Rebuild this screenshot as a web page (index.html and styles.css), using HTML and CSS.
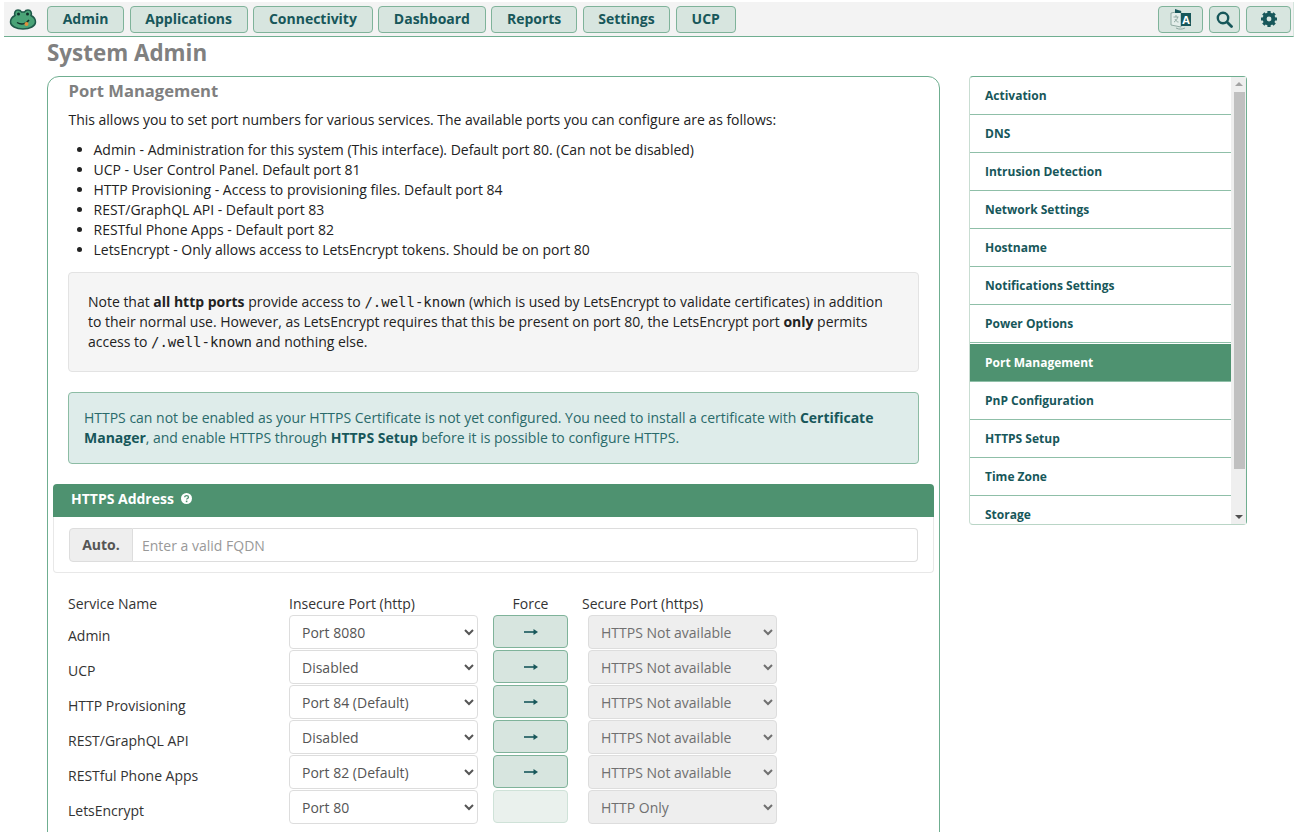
FILE: index.html
```html
<!DOCTYPE html>
<html lang="en">
<head>
  <meta charset="UTF-8">
  <title>System Admin</title>
  <link rel="stylesheet" href="styles.css">
</head>
<body>

<div class="topbar">
  <div class="logo">
    <svg width="28" height="24" viewBox="0 0 28 24">
      <path d="M6 8.5C5 6 6 3 9 3c2 0 3 1 3.500 2h3C16 4 17 3 19 3c3 0 4 3 3 5.500 3 1.500 4.500 4 4.500 6.500 0 4-5.500 7-12.500 7S1.500 19 1.500 15C1.500 12.500 3 10 6 8.500z" fill="#4aa377" stroke="#1f5a4a" stroke-width="1.500"/>
      <circle cx="9.500" cy="7" r="1.500" fill="#10302a"/>
      <circle cx="18.500" cy="7" r="1.500" fill="#10302a"/>
      <path d="M8 15.500c4 2.500 9 2 12-2.500" fill="none" stroke="#10302a" stroke-width="1.400"/>
      <circle cx="17.500" cy="17" r="2" fill="#e0913c"/>
    </svg>
  </div>
  <div class="nav-left">
    <a class="nav-btn">Admin</a>
    <a class="nav-btn">Applications</a>
    <a class="nav-btn">Connectivity</a>
    <a class="nav-btn">Dashboard</a>
    <a class="nav-btn">Reports</a>
    <a class="nav-btn">Settings</a>
    <a class="nav-btn">UCP</a>
  </div>
  <div class="nav-right">
    <a class="nav-btn icon-btn wide">
      <svg width="22" height="22" viewBox="0 0 22 22">
        <path d="M1 5l10-2v16L1 17z" fill="#e4eeea" stroke="#8fa9a2" stroke-width="1"/>
        <path d="M3.500 9h5M6 7v2M4 14c2-1 3.500-3 3.500-5M5 11c1 2 2 3 3.500 3" fill="none" stroke="#8fa9a2" stroke-width="1"/>
        <path d="M5 1l6 2v2H5zM11 5h10v13H11z" fill="#17575a"/>
        <path d="M6 20c3 1.500 6 1.500 9 0" fill="none" stroke="#8fa9a2" stroke-width="1"/>
        <text x="16" y="15.500" class="lang-a">A</text>
      </svg>
    </a>
    <a class="nav-btn icon-btn narrow">
      <svg width="17" height="17" viewBox="0 0 17 17">
        <circle cx="7" cy="7" r="5.200" fill="none" stroke="#17575a" stroke-width="2.400"/>
        <path d="M11 11l4.500 4.500" stroke="#17575a" stroke-width="2.800" stroke-linecap="round"/>
      </svg>
    </a>
    <a class="nav-btn icon-btn wide">
      <svg width="18" height="18" viewBox="0 0 18 18">
        <circle cx="9" cy="9" r="4.600" fill="none" stroke="#17575a" stroke-width="3.600"/>
        <path d="M9 1v16M1 9h16M3.300 3.300l11.400 11.400M14.700 3.300L3.300 14.700" stroke="#17575a" stroke-width="3.200"/>
        <circle cx="9" cy="9" r="2.400" fill="#d7e5df"/>
      </svg>
    </a>
  </div>
</div>

<div class="page">
  <div class="main">
    <h1 class="page-title">System Admin</h1>
    <div class="panel">
      <h2 class="panel-title">Port Management</h2>
      <p class="intro">This allows you to set port numbers for various services. The available ports you can configure are as follows:</p>
      <ul class="port-list">
        <li>Admin - Administration for this system (This interface). Default port 80. (Can not be disabled)</li>
        <li>UCP - User Control Panel. Default port 81</li>
        <li>HTTP Provisioning - Access to provisioning files. Default port 84</li>
        <li>REST/GraphQL API - Default port 83</li>
        <li>RESTful Phone Apps - Default port 82</li>
        <li>LetsEncrypt - Only allows access to LetsEncrypt tokens. Should be on port 80</li>
      </ul>
      <div class="well">Note that <b>all http ports</b> provide access to <code>/.well-known</code> (which is used by LetsEncrypt to validate certificates) in addition to their normal use. However, as LetsEncrypt requires that this be present on port 80, the LetsEncrypt port <b>only</b> permits access to <code>/.well-known</code> and nothing else.</div>
      <div class="alert">HTTPS can not be enabled as your HTTPS Certificate is not yet configured. You need to install a certificate with <b>Certificate Manager</b>, and enable HTTPS through <b>HTTPS Setup</b> before it is possible to configure HTTPS.</div>

      <div class="section">
        <div class="section-head">HTTPS Address
          <svg class="help" width="11" height="11" viewBox="0 0 11 11">
            <circle cx="5.500" cy="5.500" r="5.500" fill="#fff"/>
            <path d="M3.700 4.200c0-2.200 3.800-2.200 3.800 0 0 1.300-1.900 1.200-1.900 2.400" fill="none" stroke="#4e9270" stroke-width="1.300"/>
            <rect x="4.800" y="7.600" width="1.600" height="1.600" fill="#4e9270"/>
          </svg>
        </div>
        <div class="section-body">
          <div class="input-group">
            <span class="addon">Auto.</span>
            <input class="fqdn" type="text" placeholder="Enter a valid FQDN">
          </div>
        </div>
      </div>

      <div class="ports">
        <div class="port-head">Service Name</div>
        <div class="port-head">Insecure Port (http)</div>
        <div class="port-head force-head">Force</div>
        <div class="port-head secure-head">Secure Port (https)</div>

        <div class="svc">Admin</div>
        <div><select class="sel"><option>Port 8080</option></select></div>
        <div><button class="force"><svg class="arrow" width="14" height="8" viewBox="0 0 14 8"><path d="M0 4h11" stroke="#17575a" stroke-width="1.600"/><path d="M9.500 1L14 4 9.500 7z" fill="#17575a"/></svg></button></div>
        <div><select class="sel" disabled><option>HTTPS Not available</option></select></div>

        <div class="svc">UCP</div>
        <div><select class="sel"><option>Disabled</option></select></div>
        <div><button class="force"><svg class="arrow" width="14" height="8" viewBox="0 0 14 8"><path d="M0 4h11" stroke="#17575a" stroke-width="1.600"/><path d="M9.500 1L14 4 9.500 7z" fill="#17575a"/></svg></button></div>
        <div><select class="sel" disabled><option>HTTPS Not available</option></select></div>

        <div class="svc">HTTP Provisioning</div>
        <div><select class="sel"><option>Port 84 (Default)</option></select></div>
        <div><button class="force"><svg class="arrow" width="14" height="8" viewBox="0 0 14 8"><path d="M0 4h11" stroke="#17575a" stroke-width="1.600"/><path d="M9.500 1L14 4 9.500 7z" fill="#17575a"/></svg></button></div>
        <div><select class="sel" disabled><option>HTTPS Not available</option></select></div>

        <div class="svc">REST/GraphQL API</div>
        <div><select class="sel"><option>Disabled</option></select></div>
        <div><button class="force"><svg class="arrow" width="14" height="8" viewBox="0 0 14 8"><path d="M0 4h11" stroke="#17575a" stroke-width="1.600"/><path d="M9.500 1L14 4 9.500 7z" fill="#17575a"/></svg></button></div>
        <div><select class="sel" disabled><option>HTTPS Not available</option></select></div>

        <div class="svc">RESTful Phone Apps</div>
        <div><select class="sel"><option>Port 82 (Default)</option></select></div>
        <div><button class="force"><svg class="arrow" width="14" height="8" viewBox="0 0 14 8"><path d="M0 4h11" stroke="#17575a" stroke-width="1.600"/><path d="M9.500 1L14 4 9.500 7z" fill="#17575a"/></svg></button></div>
        <div><select class="sel" disabled><option>HTTPS Not available</option></select></div>

        <div class="svc">LetsEncrypt</div>
        <div><select class="sel"><option>Port 80</option></select></div>
        <div><button class="force" disabled></button></div>
        <div><select class="sel" disabled><option>HTTP Only</option></select></div>
      </div>
    </div>
  </div>

  <div class="side">
    <div class="side-list">
      <a class="side-item">Activation</a>
      <a class="side-item">DNS</a>
      <a class="side-item">Intrusion Detection</a>
      <a class="side-item">Network Settings</a>
      <a class="side-item">Hostname</a>
      <a class="side-item">Notifications Settings</a>
      <a class="side-item">Power Options</a>
      <a class="side-item active">Port Management</a>
      <a class="side-item">PnP Configuration</a>
      <a class="side-item">HTTPS Setup</a>
      <a class="side-item">Time Zone</a>
      <a class="side-item">Storage</a>
    </div>
    <div class="scrollbar">
      <div class="arrow-up"></div>
      <div class="track"><div class="thumb"></div></div>
      <div class="arrow-down"></div>
    </div>
  </div>
</div>

</body>
</html>
```

FILE: styles.css
```css
html, body {
  height: 832px;
  overflow: hidden;
}
body {
  margin: 0;
  background-color: #fff;
  color: #222;
  font-family: "Open Sans", sans-serif;
  font-size: 14px;
  line-height: 20px;
  letter-spacing: -0.012px;
}

/* top bar */
.topbar {
  display: flex;
  align-items: center;
  height: 34px;
  margin: 2px 2px 0 4px;
  padding-right: 2px;
  background-color: #f3f3f3;
  border-bottom: 1px solid #6fae90;
  border-right: 1px solid #d5e5dd;
}
.logo {
  display: flex;
  width: 43px;
  padding-left: 5px;
  box-sizing: border-box;
}
.nav-left, .nav-right {
  display: flex;
  gap: 5.6px;
}
.nav-right {
  margin-left: auto;
  gap: 6px;
}
.nav-btn {
  display: flex;
  align-items: center;
  justify-content: center;
  box-sizing: border-box;
  height: 27px;
  padding: 0 14.7px;
  background-color: #d7e5df;
  border: 1px solid #7fb39a;
  border-radius: 4px;
  color: #17575a;
  font-weight: 700;
}
.icon-btn { padding: 0; }
.wide { width: 45px; }
.narrow { width: 31px; }
.lang-a {
  fill: #fff;
  font-size: 11px;
  font-weight: 700;
  text-anchor: middle;
}

/* page */
.page {
  display: flex;
  align-items: flex-start;
  padding-left: 47px;
}
.main { width: 893px; }
.page-title {
  margin: 0;
  height: 39px;
  color: #808080;
  font-size: 22.4px;
  font-weight: 700;
  line-height: 32px;
  letter-spacing: 0;
}
.panel {
  height: 900px;
  box-sizing: border-box;
  padding: 0 5px;
  border: 1px solid #6fae90;
  border-radius: 12px;
}
.panel-title {
  margin: 3px 0 0 15.5px;
  color: #808080;
  font-size: 16.6px;
  font-weight: 700;
  line-height: 22px;
  letter-spacing: 0;
}
.intro {
  margin: 8px 0 10px 15.5px;
}
.port-list {
  margin: 0 0 12px 15.5px;
  padding-left: 25px;
}
.well {
  width: 851px;
  box-sizing: border-box;
  margin: 0 0 20px 15px;
  padding: 19px 21px 19px 19px;
  background-color: #f5f5f5;
  border: 1px solid #e3e3e3;
  border-radius: 4px;
}
code {
  font-family: "DejaVu Sans Mono", monospace;
  font-size: 14px;
  line-height: 1;
}
.alert {
  width: 851px;
  box-sizing: border-box;
  margin: 0 0 20px 15px;
  padding: 15px;
  background-color: #deecea;
  border: 1px solid #8cbca4;
  border-radius: 4px;
  color: #2a6a6a;
}
.alert b { color: #17575a; }

/* https address */
.section-head {
  display: flex;
  align-items: center;
  gap: 7px;
  box-sizing: border-box;
  height: 33px;
  padding: 0 0 4px 18px;
  background-color: #4e9270;
  border-radius: 4px 4px 0 0;
  color: #fff;
  font-weight: 700;
}
.section-body {
  height: 56px;
  box-sizing: border-box;
  padding: 11px 15px;
  border: 1px solid #e8e8e8;
  border-top: none;
  border-radius: 0 0 4px 4px;
}
.input-group {
  display: flex;
  height: 34px;
}
.addon {
  display: flex;
  align-items: center;
  justify-content: center;
  box-sizing: border-box;
  width: 64px;
  background-color: #eee;
  border: 1px solid #ddd;
  border-radius: 4px 0 0 4px;
  color: #555;
  font-weight: 700;
}
.fqdn {
  flex: 1;
  min-width: 0;
  padding: 0 9px;
  border: 1px solid #ddd;
  border-left: none;
  border-radius: 0 4px 4px 0;
  color: #555;
  font-family: "Open Sans", sans-serif;
  font-size: 14px;
  outline: none;
}
.fqdn::placeholder { color: #999; }

/* ports table */
.ports {
  display: grid;
  grid-template-columns: 221px 204px 95px 189px;
  grid-template-rows: 21px;
  grid-auto-rows: 35px;
  margin: 21px 0 0 15px;
}
.port-head { color: #333; }
.force-head {
  width: 75px;
  text-align: center;
}
.secure-head { margin-left: -6px; }
.svc {
  padding-top: 11px;
  color: #333;
}
.sel {
  width: 189px;
  height: 34px;
  padding: 0 8px;
  background-color: #fff;
  border: 1px solid #ddd;
  border-radius: 4px;
  color: #555;
  font-family: "Open Sans", sans-serif;
  font-size: 14px;
}
.sel:disabled {
  background-color: #eee;
  opacity: 1;
  color: #707070;
}
.force {
  display: flex;
  align-items: center;
  justify-content: center;
  width: 75px;
  height: 33px;
  padding: 0;
  background-color: #d7e5df;
  border: 1px solid #7fb39a;
  border-radius: 4px;
}
.force:disabled {
  background-color: #eaf1ed;
  border-color: #cfe2d8;
}

/* side menu */
.side {
  display: flex;
  width: 278px;
  height: 449px;
  box-sizing: border-box;
  margin: 39px 0 0 29px;
  border: 1px solid #6fae90;
  border-left-color: #c9ddd2;
  border-bottom-color: #b9d5c6;
  border-radius: 4px;
}
.side-list {
  flex: 1;
  overflow: hidden;
}
.side-item {
  display: block;
  box-sizing: border-box;
  height: 38px;
  padding: 9px 15px 0;
  border-bottom: 1px solid #8fbfa8;
  color: #17575a;
  font-size: 12px;
  font-weight: 700;
  letter-spacing: 0;
}
.side-item.active {
  margin-top: 1px;
  background-color: #4e9270;
  color: #fff;
}

/* the scrollbar of the side menu */
.scrollbar {
  display: flex;
  flex-direction: column;
  align-items: center;
  width: 15px;
  background-color: #efefef;
}
.arrow-up, .arrow-down {
  flex: none;
  width: 0;
  height: 0;
  border-left: 4px solid transparent;
  border-right: 4px solid transparent;
}
.arrow-up {
  margin: 5px 0 6px;
  border-bottom: 4px solid #a3a3a3;
}
.arrow-down {
  margin: 6px 0 5px;
  border-top: 4px solid #505050;
}
.track {
  flex: 1;
  width: 100%;
}
.thumb {
  width: 11px;
  height: 377px;
  margin: 0 1px 0 3px;
  background-color: #c0c0c0;
}
```
